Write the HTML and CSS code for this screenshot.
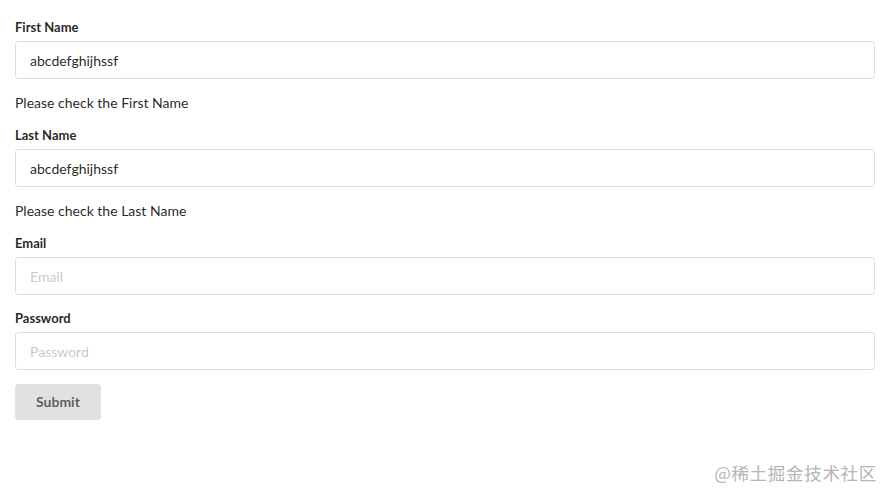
FILE: index.html
```html
<!DOCTYPE html>
<html>
<head>
<meta charset="utf-8">
<link rel="stylesheet" href="styles.css">
</head>
<body>
<form class="form">
  <div class="field">
    <label>First Name</label>
    <input type="text" value="abcdefghijhssf">
  </div>
  <p class="error">Please check the First Name</p>
  <div class="field">
    <label>Last Name</label>
    <input type="text" value="abcdefghijhssf">
  </div>
  <p class="error">Please check the Last Name</p>
  <div class="field">
    <label>Email</label>
    <input type="text" placeholder="Email">
  </div>
  <div class="field">
    <label>Password</label>
    <input type="password" placeholder="Password">
  </div>
  <button type="button" class="button">Submit</button>
</form>
<div class="watermark">@稀土掘金技术社区</div>
</body>
</html>
```
FILE: styles.css
```css
html, body {
  margin: 0;
  padding: 0;
  background: #fff;
}
body {
  font-family: Lato, "Helvetica Neue", Arial, "Noto Sans CJK SC", sans-serif;
  font-size: 14px;
  line-height: 1.4285em;
  color: rgba(0, 0, 0, 0.87);
  position: relative;
  height: 500px;
}
.form {
  padding: 18px 17px 0 15px;
  display: flex;
  flex-direction: column;
  align-items: stretch;
}
.field {
  display: flex;
  flex-direction: column;
  margin-bottom: 14px;
}
.field label {
  font-size: 13px;
  font-weight: 700;
  line-height: 19px;
  margin-bottom: 4px;
  color: rgba(0, 0, 0, 0.87);
}
.field input {
  font-family: Lato, "Helvetica Neue", Arial, sans-serif;
  font-size: 14px;
  line-height: 17px;
  height: 38px;
  box-sizing: border-box;
  padding: 9.5px 14px;
  border: 1px solid rgba(34, 36, 38, 0.15);
  border-radius: 4px;
  color: rgba(0, 0, 0, 0.87);
  background: #fff;
  outline: none;
  margin: 0;
}
.field input::placeholder {
  color: rgba(191, 191, 191, 0.87);
}
.error {
  margin: 0 0 13px;
  font-size: 14px;
  line-height: 20px;
  color: rgba(0, 0, 0, 0.87);
}
.button {
  align-self: flex-start;
  font-family: Lato, "Helvetica Neue", Arial, sans-serif;
  font-size: 14px;
  font-weight: 700;
  line-height: 14px;
  padding: 11px 21px;
  border: none;
  border-radius: 4px;
  background: #e0e1e2;
  color: rgba(0, 0, 0, 0.6);
  margin: 0;
}
.watermark {
  position: absolute;
  right: 15px;
  top: 462px;
  font-family: "Noto Sans CJK SC", sans-serif;
  font-size: 17.5px;
  line-height: 22px;
  color: #b5b5b5;
  letter-spacing: 0.7px;
}
```
